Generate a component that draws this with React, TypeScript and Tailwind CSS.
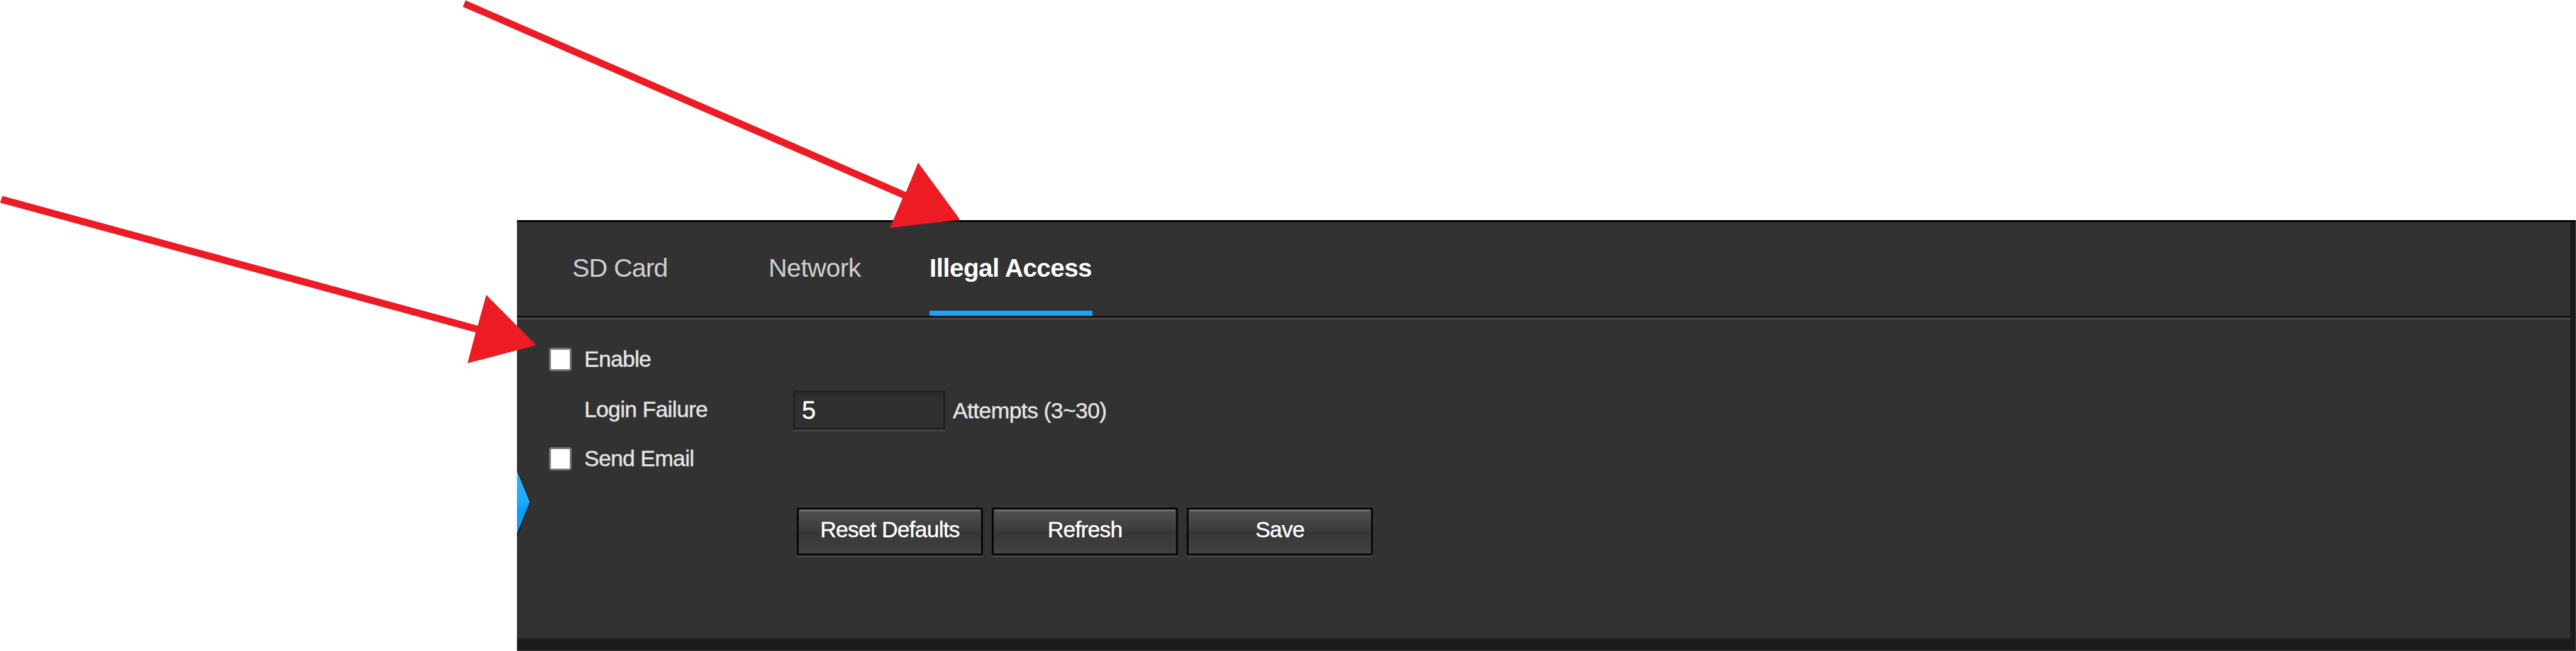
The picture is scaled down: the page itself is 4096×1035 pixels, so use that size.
import type { ReactNode } from "react";

function Arrows() {
  return (
    <svg
      className="pointer-events-none absolute inset-0 h-[1035px] w-[4096px]"
      viewBox="0 0 6057 1531"
      preserveAspectRatio="none"
      aria-hidden="true"
    >
      <g fill="#ed1c24">
        <path d="M5.8 460.7 L1123.4 765.7 L1143.3 693.3 L1261 811.7 L1099.3 854.3 L1118.4 781.7 L0 476.5 Z" />
        <path d="M1094.6 0.7 L2130.2 451.4 L2158.9 382.5 L2257.7 516.8 L2092.7 535.7 L2122.2 466.4 L1088.3 15.8 Z" />
      </g>
    </svg>
  );
}

function DrawerHandle() {
  return (
    <svg className="absolute left-0 top-[396px] h-[112px] w-[26px]" viewBox="0 0 26 112" aria-hidden="true">
      <defs>
        <linearGradient id="handle" x1="0" y1="0" x2="0" y2="1">
          <stop offset="0" stopColor="#31b5fa" />
          <stop offset="0.5" stopColor="#1ea8ff" />
          <stop offset="0.62" stopColor="#0d9dff" />
          <stop offset="1" stopColor="#0a9aff" />
        </linearGradient>
      </defs>
      <path d="M0 1 L22.5 52 L0 109 Z" fill="#1c1c1c" />
      <path d="M0 3 L20.5 52 L0 102 Z" fill="url(#handle)" />
    </svg>
  );
}

function Checkbox() {
  return <span className="h-[37px] w-[36px] shrink-0 rounded-[4px] border-3 border-[#767676] bg-white" />;
}

function Button({ children }: { children: ReactNode }) {
  return (
    <button className="relative flex h-[76px] w-[296px] justify-center rounded-[2px] border-3 border-[#060606] bg-[linear-gradient(180deg,#505050_0%,#4c4c4c_12%,#424242_32%,#3c3c3c_46%,#333333_54%,#3a3a3a_62%,#3c3c3c_78%,#424242_100%)] shadow-[0_3px_0_#454545]">
      <span className="absolute inset-x-[2px] top-0 h-[3px] bg-[#707070]" />
      <span className="mt-[15px] block text-[35.5px] leading-[35px] tracking-[-0.8px] text-white [-webkit-text-stroke:0.4px]">
        {children}
      </span>
    </button>
  );
}

export default function App() {
  return (
    <main className="relative flex h-[1035px] w-[4096px] flex-col overflow-hidden bg-white pl-[822px] pt-[350px] font-['Liberation_Sans',Arial,sans-serif]">
      <section className="relative h-[685px] border-b border-r border-[#444444] bg-[#1b1b1b]">
        <div className="h-[665px] w-[3265px] bg-[#323232]">
          <div className="-mr-[8px] h-[3px] bg-black" />
          <nav className="flex h-[149px] whitespace-nowrap pl-[88px] text-[41px] leading-[40px] text-[#cfcfcf]">
            <span className="w-[312px] pt-[53px] tracking-[-0.8px]">SD Card</span>
            <span className="w-[256px] pt-[53px] tracking-[-0.5px]">Network</span>
            <span className="w-[259px] border-b-8 border-[#1ea2ff] pt-[53px] text-[40.5px] font-bold tracking-[-0.6px] text-white">
              Illegal Access
            </span>
          </nav>
          <div className="h-[3px] bg-[#141414]" />
          <div className="h-[3px] bg-[#484848]" />
          <form className="flex flex-col pl-[51px] pt-[45px] text-[35.5px] leading-[35px] text-[#e6e6e6] [-webkit-text-stroke:0.4px]">
            <div className="flex h-[37px]">
              <Checkbox />
              <span className="ml-[20px] mt-[1px] tracking-[-0.75px]">Enable</span>
            </div>
            <div className="mt-[31px] flex h-[62px]">
              <span className="ml-[56px] mt-[13px] w-[332px] tracking-[-0.7px]">Login Failure</span>
              <span className="h-[62px] w-[242px] border-3 border-[#212121] bg-[linear-gradient(180deg,#282828_0%,#2d2d2d_10%,#2f2f2f_20%,#2f2f2f_100%)] pl-[11px] pt-[9px] text-[40px] leading-[39px] text-white shadow-[0_3px_0_#454545]">
                5
              </span>
              <span className="ml-[12px] mt-[15px] tracking-[-0.6px]">Attempts (3~30)</span>
            </div>
            <div className="mt-[28px] flex h-[37px]">
              <Checkbox />
              <span className="ml-[20px] mt-[1px] tracking-[-0.7px]">Send Email</span>
            </div>
            <div className="ml-[394px] mt-[59px] flex gap-[14px]">
              <Button>Reset Defaults</Button>
              <Button>Refresh</Button>
              <Button>Save</Button>
            </div>
          </form>
        </div>
        <DrawerHandle />
      </section>
      <Arrows />
    </main>
  );
}
